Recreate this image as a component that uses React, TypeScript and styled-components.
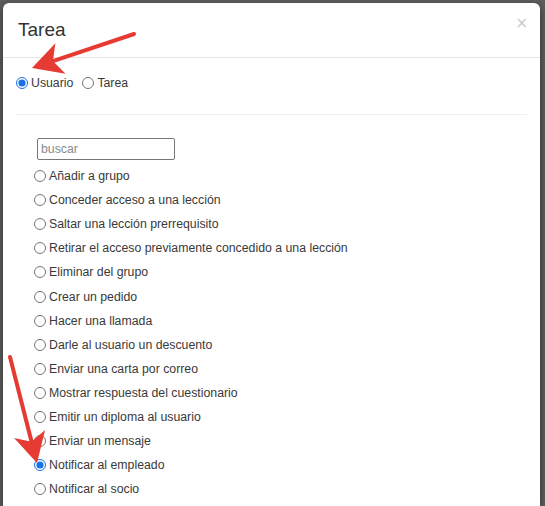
import React, { useState } from "react";
import styled, { createGlobalStyle } from "styled-components";

const GlobalStyle = createGlobalStyle`
	html, body {
		margin: 0;
		padding: 0;
		background: #5e5e5e;
	}
	body {
		font-family: "Liberation Sans", Arial, sans-serif;
		color: #333;
	}
`;

const Backdrop = styled.div`
	height: 506px;
	overflow: hidden;
	padding: 3px 5px 0 3px;
	box-sizing: border-box;
`;

const Modal = styled.div`
	position: relative;
	background: #fff;
	border-radius: 6px 6px 0 0;
	height: 100%;
	box-shadow: 0 3px 9px rgba(0, 0, 0, 0.5);
`;

const Header = styled.div`
	display: flex;
	align-items: center;
	justify-content: space-between;
	padding: 15px 15px 15px 15px;
	height: 24px;
	border-bottom: 1px solid #e5e5e5;
`;

const Title = styled.h4`
	margin: 0;
	font-size: 19px;
	font-weight: normal;
	line-height: 24px;
	color: #333;
`;

const Close = styled.button`
	border: 0;
	background: none;
	padding: 0;
	margin: -13px -3px 0 0;
	font-family: "DejaVu Sans", sans-serif;
	font-size: 15px;
	line-height: 1;
	color: #c8c8c8;
	cursor: pointer;
`;

const Body = styled.div`
	padding: 13px 13px 0 13px;
`;

const TypeRow = styled.div`
	display: flex;
	align-items: center;
	height: 20px;
	margin-top: 2px;
	gap: 9px;
`;

const Choice = styled.label`
	display: flex;
	align-items: center;
	gap: 3px;
	font-size: 12.3px;
	color: #3a3a3a;
	cursor: pointer;
`;

const Radio = styled.input.attrs({ type: "radio" })`
	margin: 0;
	width: 12px;
	height: 12px;
	accent-color: #1a73e8;
`;

const Divider = styled.hr`
	border: 0;
	border-top: 1px solid #eee;
	margin: 21px 0 0 0;
`;

const Filter = styled.div`
	padding: 23px 0 0 21px;
`;

const SearchInput = styled.input`
	box-sizing: border-box;
	width: 138px;
	height: 22px;
	padding: 1px 3px;
	border: 1px solid #767676;
	border-radius: 2px;
	font-family: "Liberation Sans", Arial, sans-serif;
	font-size: 12.3px;
	color: #333;
	&::placeholder {
		color: #8a8a8a;
	}
`;

const OptionList = styled.div`
	display: flex;
	flex-direction: column;
	padding: 4px 0 0 18px;
`;

const OptionRow = styled.div`
	height: 24.1px;
	display: flex;
	align-items: center;
`;

const Arrows = styled.svg`
	position: absolute;
	left: 0;
	top: 0;
	pointer-events: none;
`;

const actions = [
	"Añadir a grupo",
	"Conceder acceso a una lección",
	"Saltar una lección prerrequisito",
	"Retirar el acceso previamente concedido a una lección",
	"Eliminar del grupo",
	"Crear un pedido",
	"Hacer una llamada",
	"Darle al usuario un descuento",
	"Enviar una carta por correo",
	"Mostrar respuesta del cuestionario",
	"Emitir un diploma al usuario",
	"Enviar un mensaje",
	"Notificar al empleado",
	"Notificar al socio"
];

function RedArrow(props: { from: [number, number]; to: [number, number] }) {
	const [x1, y1] = props.from;
	const [x2, y2] = props.to;
	const dx = x2 - x1;
	const dy = y2 - y1;
	const len = Math.sqrt(dx * dx + dy * dy);
	const ux = dx / len;
	const uy = dy / len;
	// head: 30 long, 16 half-width, notched back
	const bx = x2 - ux * 30;
	const by = y2 - uy * 30;
	const px = -uy * 16;
	const py = ux * 16;
	const lx = x2 - ux * 22;
	const ly = y2 - uy * 22;
	return (
		<g fill="#e53b32" stroke="#e53b32">
			<line x1={x1} y1={y1} x2={lx} y2={ly} strokeWidth={4} strokeLinecap="round" />
			<polygon
				points={`${x2},${y2} ${bx + px},${by + py} ${lx},${ly} ${bx - px},${by - py}`}
				stroke="none"
			/>
		</g>
	);
}

export default function App() {
	const [target, setTarget] = useState("user");
	const [action, setAction] = useState("Notificar al empleado");

	return (
		<>
			<GlobalStyle />
			<Backdrop>
				<Modal>
					<Header>
						<Title>Tarea</Title>
						<Close aria-label="Cerrar">×</Close>
					</Header>
					<Body>
						<TypeRow>
							<Choice>
								<Radio
									name="target"
									checked={target === "user"}
									onChange={() => setTarget("user")}
								/>
								Usuario
							</Choice>
							<Choice>
								<Radio
									name="target"
									checked={target === "task"}
									onChange={() => setTarget("task")}
								/>
								Tarea
							</Choice>
						</TypeRow>
						<Divider />
						<Filter>
							<SearchInput placeholder="buscar" />
						</Filter>
						<OptionList>
							{actions.map(a => (
								<OptionRow key={a}>
									<Choice>
										<Radio
											name="action"
											checked={action === a}
											onChange={() => setAction(a)}
										/>
										{a}
									</Choice>
								</OptionRow>
							))}
						</OptionList>
					</Body>
					<Arrows width="537" height="503" viewBox="3 3 537 503">
						<RedArrow from={[134, 34]} to={[32, 68]} />
						<RedArrow from={[10, 357]} to={[37, 463]} />
					</Arrows>
				</Modal>
			</Backdrop>
		</>
	);
}
